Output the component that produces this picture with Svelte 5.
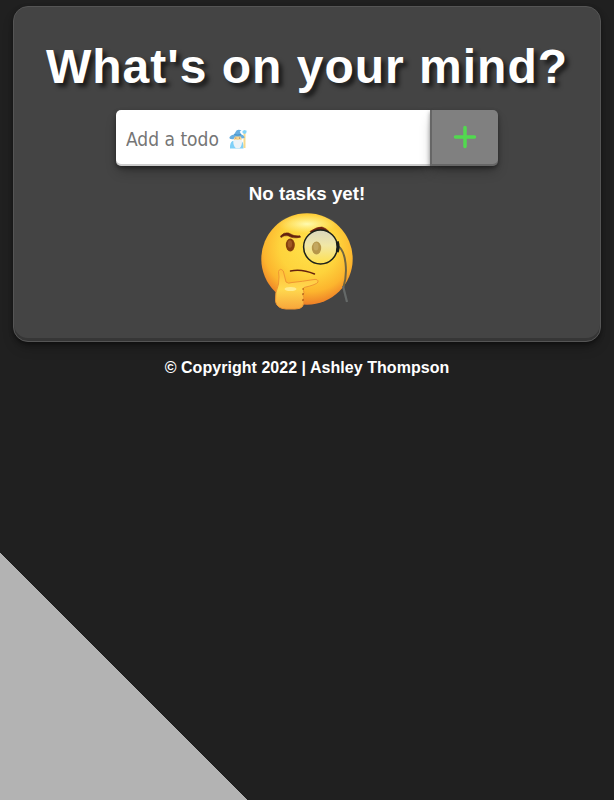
<script>
  let draft = $state('');
</script>

<div class="page">
  <main class="card">
    <h1>What's on your mind?</h1>
    <form class="entry" onsubmit={(e) => e.preventDefault()}>
      <div class="field">
        <input type="text" placeholder="Add a todo" aria-label="Add a todo" bind:value={draft} />
        {#if !draft}
          <svg class="wizard" viewBox="0 0 18 20" aria-hidden="true">
            <path d="M1 19.500q-.3-6 2.500-7.500h9q2.500 2 2 7.500z" fill="#7fd0f8" />
            <path d="M15.500 4v15" stroke="#f7da8c" stroke-width="2" />
            <path d="M13.500 2l2-1 2.200.7-.5 2.600-2 .7-1.700-1.200z" fill="#83d5fa" />
            <rect x="4.800" y="7" width="7.800" height="4.500" rx="1" fill="#fbd58c" />
            <path d="M4.300 11.500L6.500 10.500 8.700 11 11 10.500 13 11.500Q13.300 17 10.500 19.300H7Q4 17 4.300 11.500z" fill="#eef3f7" />
            <path d="M.3 9Q1 6 5 5.500L7.500 1.500Q10-.3 12.500 1.800L10.700 2.500 12.300 5.600Q15.500 6.500 15.500 9L12.700 9.500 11.800 7.500H6L4.500 10.200Q1 10.500.3 9z" fill="#68aee0" />
            <path d="M5.200 5.600q3 1 7 0" stroke="#4290c7" fill="none" />
            <path d="M6.800 8.500v1.200M10.500 8.500v1.200" stroke="#98755c" stroke-width=".8" />
          </svg>
        {/if}
      </div>
      <button type="submit" aria-label="Add task">
        <svg viewBox="0 0 24 24" width="24" height="24"><path d="M12 2.500v19M2.500 12h19" stroke="#52d94f" stroke-width="3.500" stroke-linecap="round" /></svg>
      </button>
    </form>
    <h2>No tasks yet!</h2>
    <svg class="thinking" viewBox="0 0 115 110" aria-hidden="true">
      <defs>
        <radialGradient id="face" cx=".52" cy=".36" r=".64">
          <stop offset="0" stop-color="#ffe14a" />
          <stop offset=".5" stop-color="#fed33c" />
          <stop offset=".78" stop-color="#fcb52e" />
          <stop offset="1" stop-color="#ee7f27" />
        </radialGradient>
        <radialGradient id="shine">
          <stop offset="0" stop-color="#fffbb0" />
          <stop offset="1" stop-color="#fff18a" stop-opacity="0" />
        </radialGradient>
        <linearGradient id="lens" x2="0" y2="1">
          <stop offset="0" stop-color="#d9d6bd" />
          <stop offset=".45" stop-color="#f1e7a6" />
          <stop offset="1" stop-color="#ffe04c" />
        </linearGradient>
        <linearGradient id="hand" x2="0" y2="1">
          <stop offset="0" stop-color="#ffbe38" />
          <stop offset=".5" stop-color="#ffd94f" />
          <stop offset="1" stop-color="#f8a63b" />
        </linearGradient>
      </defs>
      <circle cx="57" cy="54" r="45.700" fill="url(#face)" />
      <ellipse cx="57" cy="19" rx="30" ry="9.500" fill="url(#shine)" />
      <path d="M30.500 31Q34 27 38.500 28Q44 31.800 50 30.800L50.500 32.200Q43 34 38 30.700Q34 30 31 32.500z" fill="#65220f" stroke="#65220f" stroke-width=".6" stroke-linejoin="round" />
      <ellipse cx="40.300" cy="40" rx="4.500" ry="6.500" fill="#85400f" />
      <ellipse cx="39.900" cy="39" rx="2.200" ry="3.800" fill="#a05a23" />
      <path d="M60 26.500Q67 21.500 72 22Q76 23 79 26.500L76 27Q71 24.500 67 25.500L61 27.500z" fill="#70230f" stroke="#70230f" stroke-width=".6" stroke-linejoin="round" />
      <path d="M88 41q6 4 7.500 17t-2 24" fill="none" stroke="#716640" stroke-width="2" />
      <path d="M93 81l4 16" stroke="#656968" stroke-width="2.200" />
      <circle cx="70.500" cy="42" r="16.900" fill="url(#lens)" stroke="#1c211b" stroke-width="1.500" />
      <ellipse cx="66.500" cy="43" rx="4.700" ry="6.500" fill="#b6964a" />
      <ellipse cx="66" cy="41.500" rx="2.500" ry="4" fill="#c3a760" />
      <path d="M87.200 36.500q1.800 5 0 10.500" fill="none" stroke="#171b18" stroke-width="3" />
      <path d="M40.500 66q11-2.500 24 3" fill="none" stroke="#66220e" stroke-width="1.400" stroke-linecap="round" />
      <path d="M28.500 66.500Q30 62.500 33.300 66L36 77Q38 79 42 77.500Q52 76.500 64 74.500Q68.500 74 68 77Q67 79.500 54 82.500Q52 83.500 53.500 85.500 54.800 88 53 90 54.500 92.500 53 95 54.500 98 52.500 101.500 50.500 104 45 104H36Q27 103.500 25.500 96.500 24.800 88 28.500 79 29.500 71 28.500 66.500Z" fill="url(#hand)" stroke="#ef9732" stroke-width="1" stroke-linejoin="round" />
      <ellipse cx="40.500" cy="84" rx="6" ry="2" fill="#fff0a0" opacity=".8" />
      <path d="M53.500 83.500l-.7 1m.7 4l-1 1m1 5l-1 1" stroke="#93400f" stroke-width="1.200" />
    </svg>
  </main>
  <footer>© Copyright 2022 | Ashley Thompson</footer>
</div>

<style>
  :global(body) { margin: 0; }
  .page {
    box-sizing: border-box;
    height: 800px;
    padding: 6px 13px 0;
    overflow: hidden;
    background: linear-gradient(45deg, #b3b3b3 174.660px, #202020 174.660px);
    color: #fff;
    font-family: "Liberation Sans", Arial, sans-serif;
    font-weight: 700;
    text-align: center;
  }
  .card {
    box-sizing: border-box;
    height: 336px;
    padding-top: 32px;
    display: flex;
    flex-direction: column;
    align-items: center;
    background: #444;
    border: 1px solid #555;
    border-radius: 15px;
    box-shadow: rgba(0,0,0,.4) 0 2px 4px, rgba(0,0,0,.3) 0 7px 13px -3px, rgba(0,0,0,.2) 0 -3px 0 inset;
  }
  h1 {
    margin: 0;
    height: 71px;
    font-size: 48px;
    line-height: 55px;
    letter-spacing: 1px;
    white-space: nowrap;
    text-shadow: 4px 4px 4px rgba(0,0,0,.6);
  }
  .entry {
    display: flex;
    width: 382px;
    height: 56px;
    margin: 0;
  }
  .field { position: relative; width: 314px; }
  input {
    box-sizing: border-box;
    width: 314px;
    height: 56px;
    padding: 2px 10px 0;
    border: 0;
    border-radius: 5px 0 0 5px;
    outline: 0;
    background: #fff;
    font: 19px "DejaVu Sans Condensed", "DejaVu Sans", sans-serif;
    font-stretch: condensed;
    box-shadow: rgba(0,0,0,.4) 0 2px 4px, rgba(0,0,0,.3) 0 7px 13px -3px, rgba(0,0,0,.2) 0 -2px 0 inset;
  }
  input::placeholder { color: #757575; opacity: 1; }
  .wizard { position: absolute; left: 113px; top: 19px; width: 18px; height: 20px; }
  button {
    position: relative;
    display: flex;
    align-items: center;
    justify-content: center;
    width: 68px;
    height: 56px;
    padding: 0 0 2px;
    border: 0;
    border-left: 2px solid #666;
    border-radius: 0 5px 5px 0;
    background: #808080;
    box-shadow: rgba(0,0,0,.4) 0 2px 4px, rgba(0,0,0,.3) 0 7px 13px -3px, rgba(0,0,0,.2) 0 -2px 0 inset;
  }
  h2 { margin: 17px 0 0; font-size: 18.720px; line-height: 21px; }
  .thinking { width: 115px; height: 110px; margin-top: 1px; flex: none; }
  footer { margin-top: 17px; font-size: 16px; line-height: 18px; letter-spacing: .04px; }
</style>
